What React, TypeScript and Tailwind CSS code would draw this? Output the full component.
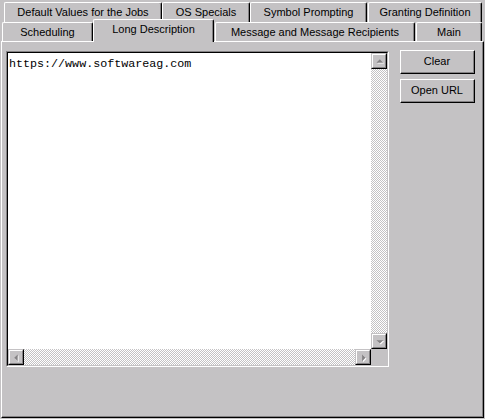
import React from "react";

const face = "bg-[#c4c2c4]";

function Tab({ label, className }: { label: string; className: string }) {
  return (
    <div
      className={[
        "flex items-center justify-center rounded-t-[2px] border-l border-t border-r border-l-white border-t-white border-r-black shadow-[inset_-1px_0_0_#848284]",
        face,
        className,
      ].join(" ")}
    >
      {label}
    </div>
  );
}

function Arrow({ dir }: { dir: "up" | "down" | "left" | "right" }) {
  const shapes = {
    up: "4,9 8,5 12,9",
    down: "4,6 12,6 8,10",
    left: "9,4 9,12 5,8",
    right: "6,4 6,12 10,8",
  };
  return (
    <svg width="12" height="12" viewBox="0 0 14 14" className="block">
      <polygon points={shapes[dir]} fill="#ffffff" transform="translate(1,1)" />
      <polygon points={shapes[dir]} fill="#848284" />
    </svg>
  );
}

function ScrollButton({ dir }: { dir: "up" | "down" | "left" | "right" }) {
  return (
    <div className="h-[16px] w-[16px] shrink-0 border border-t-[#c4c2c4] border-l-[#c4c2c4] border-r-black border-b-black bg-[#c4c2c4]">
      <div className="flex h-full w-full items-center justify-center border border-t-white border-l-white border-r-[#848284] border-b-[#848284]">
        <Arrow dir={dir} />
      </div>
    </div>
  );
}

const track =
  "bg-[repeating-conic-gradient(#ffffff_0_25%,#c4c2c4_0_50%)] bg-[length:2px_2px]";

function WinButton({ label, className = "" }: { label: string; className?: string }) {
  return (
    <button
      type="button"
      className={[
        "h-[24px] w-[75px] border border-t-white border-l-white border-r-black border-b-black",
        face,
        className,
      ].join(" ")}
    >
      <div className="flex h-full w-full items-center justify-center border-r border-b border-r-[#848284] border-b-[#848284] pb-[1px]">
        {label}
      </div>
    </button>
  );
}

export default function App() {
  return (
    <div
      className={`h-[419px] w-[485px] overflow-hidden ${face} font-['Liberation_Sans',Arial,sans-serif] text-[11px] leading-none text-black`}
    >
      {/* back row of tabs */}
      <div className="flex h-[22px] pt-[2px]">
        <Tab label="Default Values for the Jobs" className="ml-[4px] h-[20px] w-[158px]" />
        <Tab label="OS Specials" className="h-[20px] w-[88px]" />
        <Tab label="Symbol Prompting" className="h-[20px] w-[117px]" />
        <Tab label="Granting Definition" className="ml-[1px] h-[20px] w-[114px]" />
      </div>

      {/* front row of tabs */}
      <div className="flex h-[19px] items-end">
        <Tab label="Scheduling" className="ml-[2px] h-[19px] w-[91px]" />
        <div
          className={`relative z-10 -mb-[1px] flex h-[23px] w-[121px] items-center justify-center rounded-t-[2px] border-l border-t border-r border-l-white border-t-white border-r-black pb-[3px] shadow-[inset_-1px_0_0_#848284] ${face}`}
        >
          Long Description
        </div>
        <Tab label="Message and Message Recipients" className="ml-[1px] h-[19px] w-[200px]" />
        <Tab label="Main" className="ml-[1px] h-[19px] w-[66px]" />
      </div>

      {/* page */}
      <div className="ml-[1px] h-[377px] w-[483px] border border-t-white border-l-white border-r-black border-b-black">
        <div className="flex h-full w-full border-r border-b border-r-[#848284] border-b-[#848284] pl-[4px] pt-[9px]">
          {/* text box */}
          <div className="h-[316px] w-[383px] border border-t-[#848284] border-l-[#848284] border-r-white border-b-white">
            <div className="flex h-full w-full flex-col border border-t-black border-l-black border-r-[#c4c2c4] border-b-[#c4c2c4]">
              <div className="flex min-h-0 flex-1">
                <div className="flex-1 bg-white pl-[1px] pt-[4px] font-['Liberation_Mono','Courier_New',monospace] text-[11.7px] leading-[14px]">
                  https://www.softwareag.com
                </div>
                <div className="flex w-[16px] flex-col">
                  <ScrollButton dir="up" />
                  <div className={`flex-1 ${track}`} />
                  <ScrollButton dir="down" />
                </div>
              </div>
              <div className="flex h-[16px]">
                <ScrollButton dir="left" />
                <div className={`flex-1 ${track}`} />
                <ScrollButton dir="right" />
                <div className={`h-[16px] w-[16px] ${face}`} />
              </div>
            </div>
          </div>

          {/* buttons */}
          <div className="ml-[11px] -mt-[1px] flex flex-col gap-[5px]">
            <WinButton label="Clear" />
            <WinButton label="Open URL" />
          </div>
        </div>
      </div>
    </div>
  );
}
